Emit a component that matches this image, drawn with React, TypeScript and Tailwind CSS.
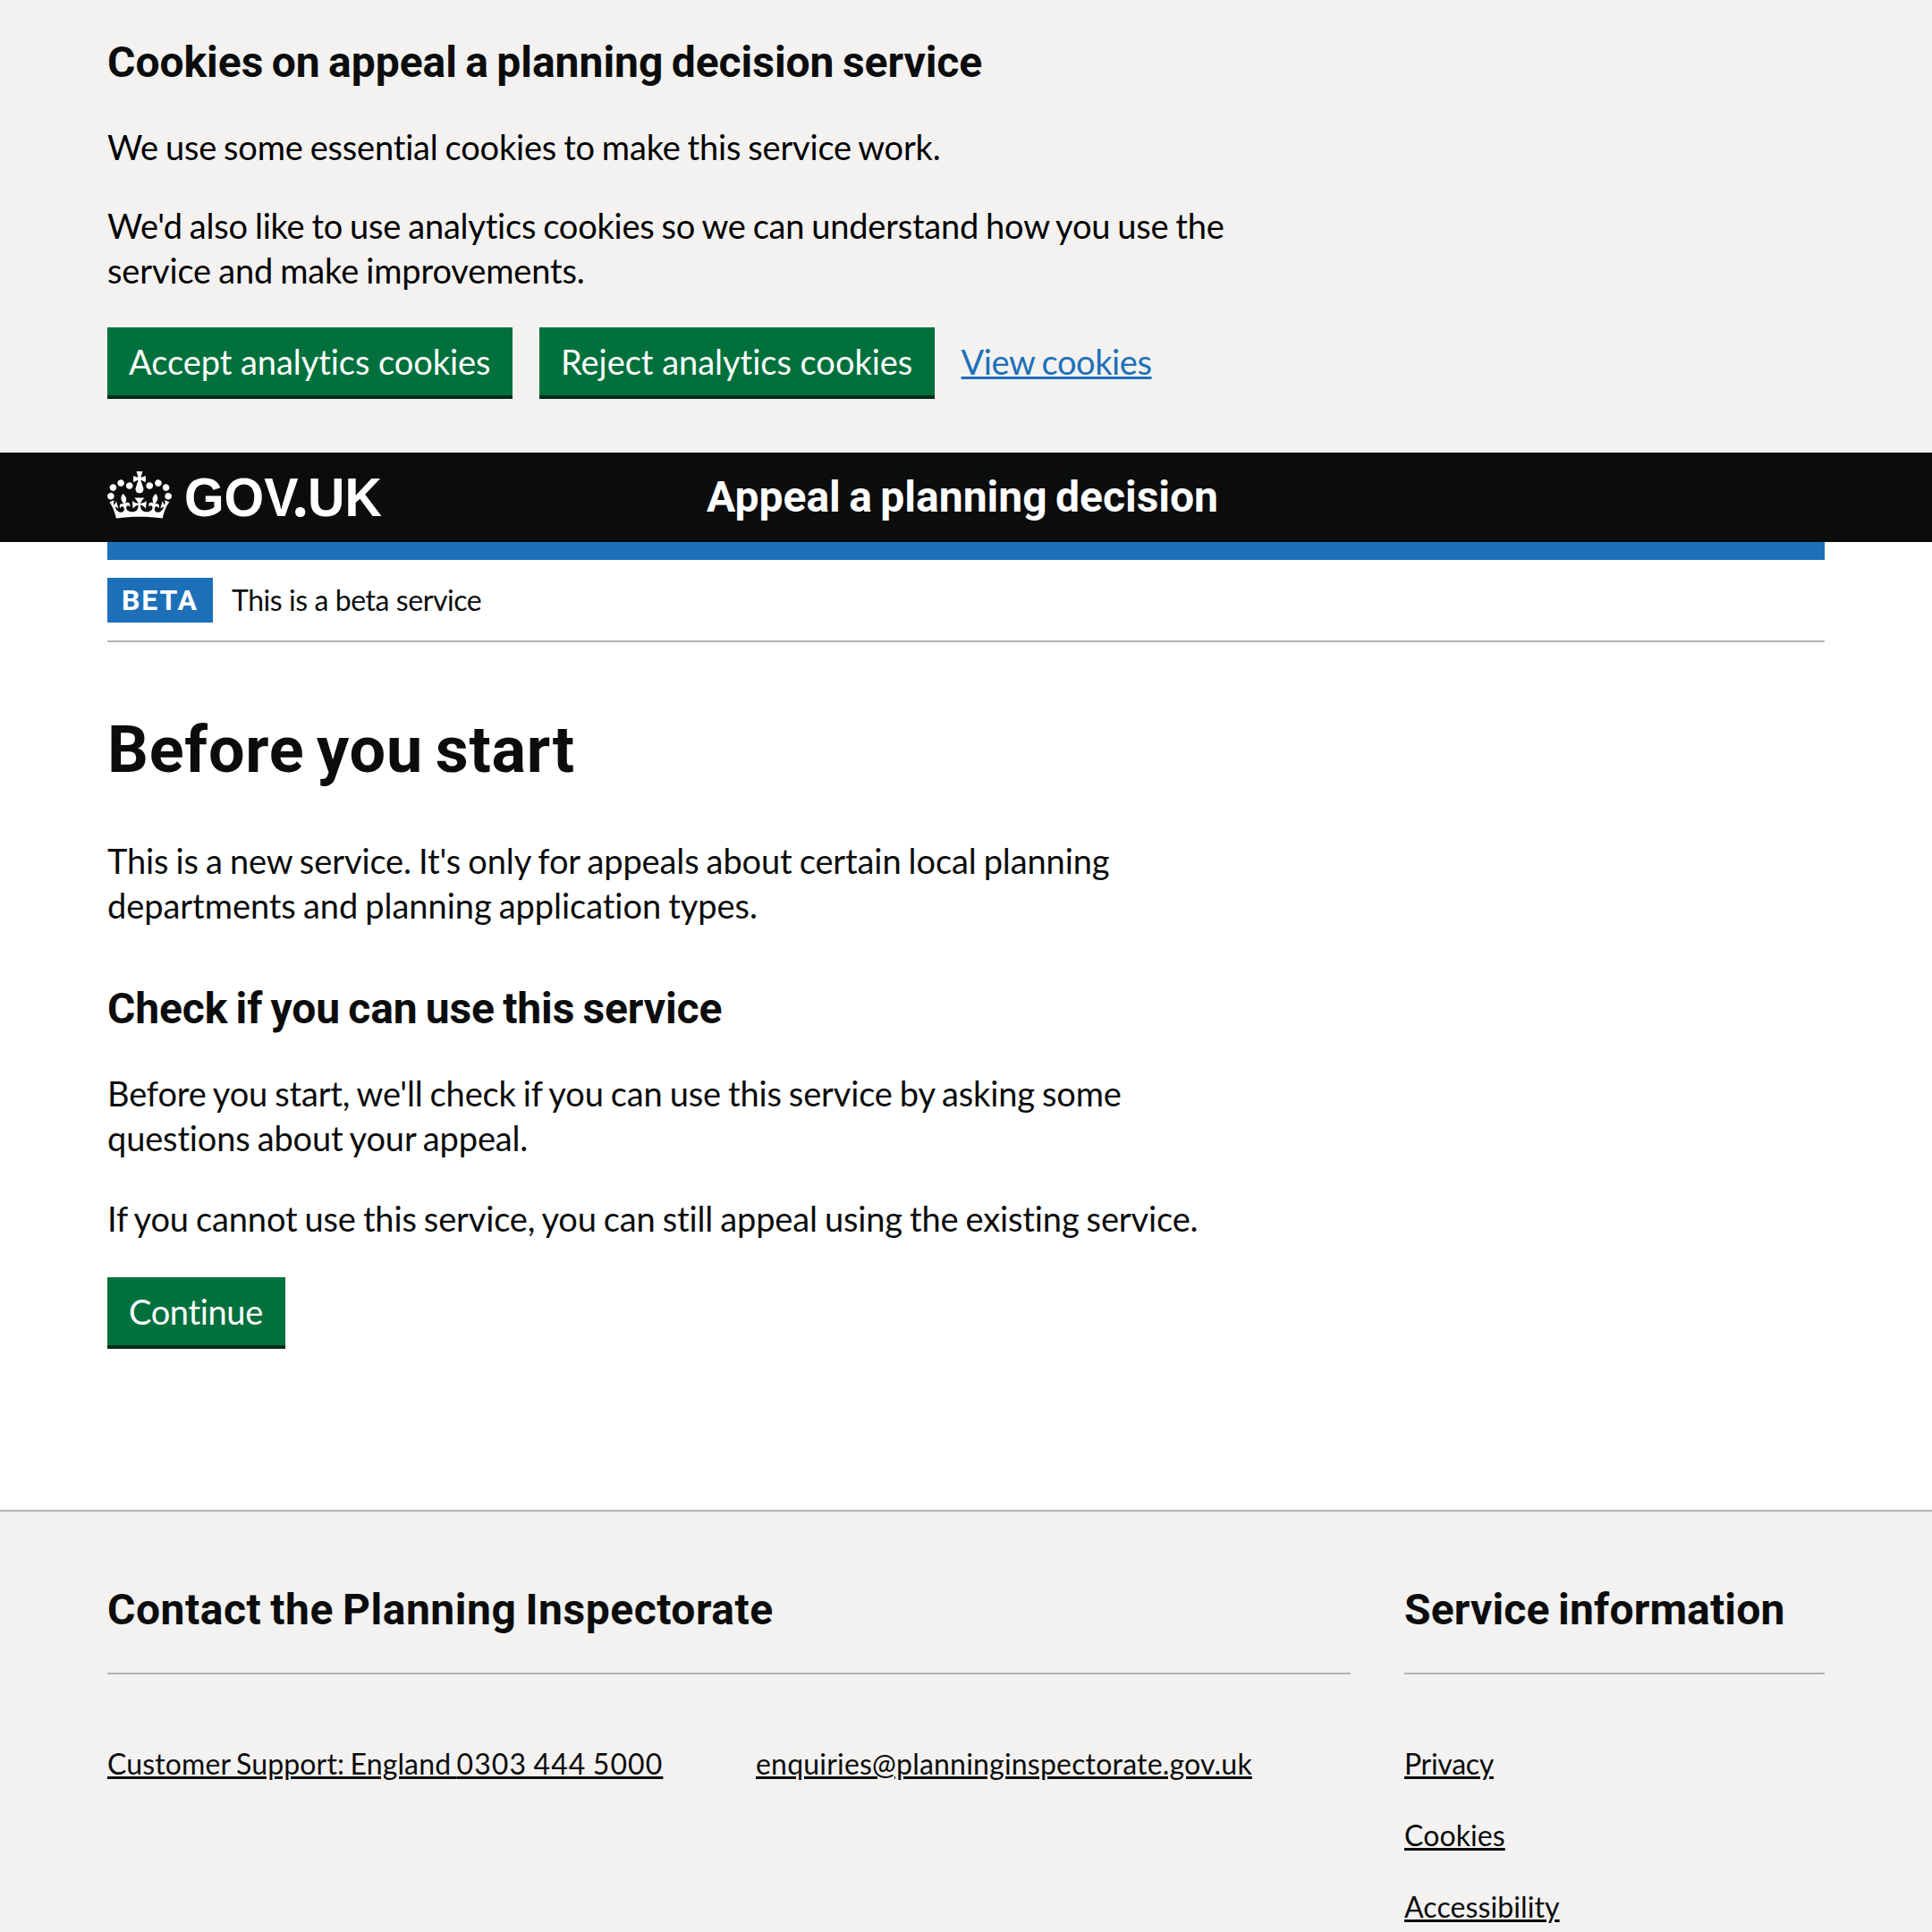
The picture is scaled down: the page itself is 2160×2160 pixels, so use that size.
import type { ReactNode } from "react";

const CROWN =
  "M25 30.2c3.5 1.5 7.7-.2 9.1-3.7 1.5-3.6-.2-7.8-3.9-9.2-3.6-1.4-7.6.3-9.1 3.9-1.4 3.5.3 7.5 3.9 9zM9 39.5c3.6 1.5 7.8-.2 9.2-3.7 1.5-3.6-.2-7.8-3.9-9.1-3.6-1.5-7.6.2-9.1 3.8-1.4 3.5.3 7.5 3.8 9zM4.4 57.2c3.5 1.5 7.7-.2 9.1-3.8 1.5-3.6-.2-7.7-3.9-9.1-3.5-1.5-7.6.3-9.1 3.8-1.4 3.5.3 7.6 3.9 9.1zm38.3-21.4c3.5 1.5 7.7-.2 9.1-3.8 1.5-3.6-.2-7.7-3.9-9.1-3.6-1.5-7.6.3-9.1 3.8-1.3 3.6.4 7.7 3.9 9.1zm64.4-5.6c-3.6 1.5-7.8-.2-9.1-3.7-1.5-3.6.2-7.8 3.8-9.2 3.6-1.4 7.7.3 9.2 3.9 1.3 3.5-.4 7.5-3.9 9zm15.9 9.3c-3.6 1.5-7.7-.2-9.1-3.7-1.5-3.6.2-7.8 3.7-9.1 3.6-1.5 7.7.2 9.2 3.8 1.5 3.5-.3 7.5-3.8 9zm4.7 17.7c-3.6 1.5-7.8-.2-9.2-3.8-1.5-3.6.2-7.7 3.9-9.1 3.6-1.5 7.7.3 9.2 3.8 1.3 3.5-.4 7.6-3.9 9.1zM89.3 35.8c-3.6 1.5-7.8-.2-9.2-3.8-1.4-3.6.2-7.7 3.9-9.1 3.6-1.5 7.7.3 9.2 3.8 1.4 3.6-.3 7.7-3.9 9.1zM69.7 17.7l8.9 4.7V9.3l-8.9 2.8c-.2-.3-.5-.6-.9-.9L72.4 0H59.6l3.5 11.2c-.3.3-.6.5-.9.9l-8.8-2.8v13.1l8.8-4.7c.3.3.6.7.9.9l-5 15.4v.1c-.2.8-.4 1.6-.4 2.4 0 4.1 3.1 7.5 7 8.1h.2c.3 0 .7.1 1 .1.4 0 .7 0 1-.1h.2c4-.6 7.1-4.1 7.1-8.1 0-.8-.1-1.7-.4-2.4V34l-5.1-15.4c.4-.2.7-.6 1-.9zM66 92.8c16.9 0 32.8 1.1 47.1 3.2 4-16.9 8.9-26.7 14-33.5l-9.6-3.4c1 4.9 1.1 7.2 0 10.2-1.5-1.4-3-4.3-4.2-8.7L108.6 76c2.8-2 5-3.2 7.5-3.3-4.4 9.4-10 11.9-13.6 11.2-4.3-.8-6.3-4.6-5.6-7.9 1-4.7 5.7-5.9 8-.5 4.3-8.7-3-11.4-7.6-8.8 7.1-7.2 7.9-13.5 2.1-21.1-8 6.1-8.1 12.3-4.5 20.8-4.7-5.4-12.1-2.5-9.5 6.2 3.4-5.2 7.9-2 7.2 3.1-.6 4.3-6.4 7.8-13.5 7.2-10.3-.9-10.9-8-11.2-13.8 2.5-.5 7.1 1.8 11 7.3L80.2 60c-4.1 4.4-8 5.3-12.3 5.4 1.4-4.4 8-11.6 8-11.6H55.5s6.4 7.2 7.9 11.6c-4.2-.1-8-1-12.3-5.4l1.4 16.4c3.9-5.5 8.5-7.7 10.9-7.3-.3 5.8-.9 12.8-11.1 13.8-7.2.6-12.9-2.9-13.5-7.2-.7-5 3.8-8.3 7.1-3.1 2.7-8.7-4.6-11.6-9.4-6.2 3.7-8.5 3.6-14.7-4.6-20.8-5.8 7.6-5 13.9 2.2 21.1-4.7-2.6-11.9.1-7.7 8.8 2.3-5.5 7.1-4.2 8.1.5.7 3.3-1.3 7.1-5.7 7.9-3.5.7-9-1.8-13.5-11.2 2.5.1 4.7 1.3 7.5 3.3l-4.7-15.4c-1.2 4.4-2.7 7.2-4.3 8.7-1.1-3-.9-5.3 0-10.2l-9.5 3.4c5 6.9 9.9 16.7 14 33.5 14.8-2.1 30.8-3.2 47.7-3.2z";

const link = "underline decoration-[3px] underline-offset-[2px]";

function Heading({ className, children }: { className: string; children: ReactNode }) {
  return (
    <h2
      className={`font-['Roboto',sans-serif] text-[48px] leading-[60px] font-bold whitespace-nowrap [word-spacing:-2.5px] ${className}`}
    >
      {children}
    </h2>
  );
}

function Line({ className, children }: { className: string; children: ReactNode }) {
  return <span className={`block whitespace-nowrap ${className}`}>{children}</span>;
}

function Button({ className, children }: { className: string; children: ReactNode }) {
  return (
    <button
      type="button"
      className={`block h-20 border-b-4 border-[#002d18] bg-[#00703c] pl-6 text-left leading-[76px] whitespace-nowrap text-white ${className}`}
    >
      {children}
    </button>
  );
}

function CookieBanner() {
  return (
    <section className="h-[506px] bg-[#f3f2f1] px-[120px] pt-10 [word-spacing:-1.5px]">
      <Heading className="tracking-[-0.03px]">Cookies on appeal a planning decision service</Heading>
      <p className="mt-[39px] text-black">
        <Line className="tracking-[-0.19px]">We use some essential cookies to make this service work.</Line>
      </p>
      <p className="mt-[38px] text-black">
        <Line className="tracking-[-0.21px]">
          We'd also like to use analytics cookies so we can understand how you use the
        </Line>
        <Line className="tracking-[-0.13px]">service and make improvements.</Line>
      </p>
      <div className="mt-[39px] flex">
        <Button className="w-[453px] tracking-[-0.05px]">Accept analytics cookies</Button>
        <Button className="ml-[30px] w-[442px] tracking-[-0.02px]">Reject analytics cookies</Button>
        <a className={`ml-[29.5px] leading-[76px] tracking-[-0.4px] text-[#1d70b8] ${link}`}>View cookies</a>
      </div>
    </section>
  );
}

function Header() {
  return (
    <header className="bg-[#0b0c0c] px-[120px] text-white">
      <div className="flex h-[100px] items-start">
        <a className="flex w-[670px] items-start">
          <svg viewBox="0 0 132 97" className="mt-[21px] h-[53px] w-[72px] fill-white" aria-hidden="true">
            <path d={CROWN} />
          </svg>
          <span className="relative ml-[13.5px] origin-left scale-x-[0.94] font-['Liberation_Sans',sans-serif] text-[61px] leading-[100px] font-bold">
            GOV.UK
            {/* Rounds off the square full stop of the wordmark */}
            <span className="absolute top-[59px] left-[131px] h-[14px] w-[15px] bg-[#0b0c0c]" />
            <span className="absolute top-[60.5px] left-[132px] h-[11px] w-[11.7px] rounded-full bg-white" />
          </span>
        </a>
        <span className="font-['Roboto',sans-serif] text-[48px] leading-[100px] font-bold whitespace-nowrap [word-spacing:-2.5px]">
          Appeal a planning decision
        </span>
      </div>
    </header>
  );
}

function PhaseBanner() {
  return (
    <div className="flex h-[92px] items-start border-b-2 border-[#b1b4b6] pt-5">
      <strong className="h-[50px] w-[118px] bg-[#1d70b8] pl-4 font-['Roboto',sans-serif] text-[32px] leading-[51px] font-bold tracking-[1.87px] text-white">
        BETA
      </strong>
      <span className="ml-[21px] text-[32px] leading-[49px] tracking-[-0.43px]">This is a beta service</span>
    </div>
  );
}

function Main() {
  return (
    <main className="h-[970px] pt-[81px] [word-spacing:-1.5px]">
      <h1 className="font-['Roboto',sans-serif] text-[72px] leading-[80px] font-bold tracking-[0.76px] [word-spacing:-5px]">
        Before you start
      </h1>
      <p className="mt-[58px]">
        <Line className="tracking-[-0.11px]">
          This is a new service. It's only for appeals about certain local planning
        </Line>
        <Line className="tracking-[-0.05px]">departments and planning application types.</Line>
      </p>
      <Heading className="mt-[61px] tracking-[-0.12px]">Check if you can use this service</Heading>
      <p className="mt-[39px]">
        <Line className="tracking-[-0.15px]">
          Before you start, we'll check if you can use this service by asking some
        </Line>
        <Line className="tracking-[-0.15px]">questions about your appeal.</Line>
      </p>
      <p className="mt-10">
        <Line className="tracking-[-0.14px]">
          If you cannot use this service, you can still appeal using the existing service.
        </Line>
      </p>
      <Button className="mt-[41px] w-[199px] tracking-[-0.35px]">Continue</Button>
    </main>
  );
}

function Footer() {
  return (
    <footer className="h-[472px] border-t-2 border-[#b1b4b6] bg-[#f3f2f1] px-[120px] pt-20">
      <div className="flex gap-[60px] text-[32px] leading-10">
        <div className="w-[1390px]">
          <Heading className="border-b-2 border-[#b1b4b6] pb-10 tracking-[0.54px]">
            Contact the Planning Inspectorate
          </Heading>
          <div className="mt-20 flex">
            <div className="w-[725px]">
              <a className={`tracking-[0.14px] [word-spacing:-2px] ${link}`}>
                Customer Support: England <span className="tracking-[1.1px]">0303 444 5000</span>
              </a>
            </div>
            <a className={`tracking-[0.2px] ${link}`}>enquiries@planninginspectorate.gov.uk</a>
          </div>
        </div>
        <div className="w-[470px]">
          <Heading className="border-b-2 border-[#b1b4b6] pb-10 tracking-[0.16px]">Service information</Heading>
          <ul className="mt-20 flex flex-col gap-10">
            <li>
              <a className={`tracking-[-0.3px] ${link}`}>Privacy</a>
            </li>
            <li>
              <a className={`tracking-[0.1px] ${link}`}>Cookies</a>
            </li>
            <li>
              <a className={`tracking-[0.1px] ${link}`}>Accessibility</a>
            </li>
          </ul>
        </div>
      </div>
    </footer>
  );
}

export default function App() {
  return (
    <div className="h-[2160px] w-[2160px] overflow-hidden bg-white font-['Lato',sans-serif] text-[38px] leading-[50px] text-[#0b0c0c]">
      <CookieBanner />
      <Header />
      <div className="px-[120px]">
        <div className="h-5 bg-[#1d70b8]" />
        <PhaseBanner />
        <Main />
      </div>
      <Footer />
    </div>
  );
}
